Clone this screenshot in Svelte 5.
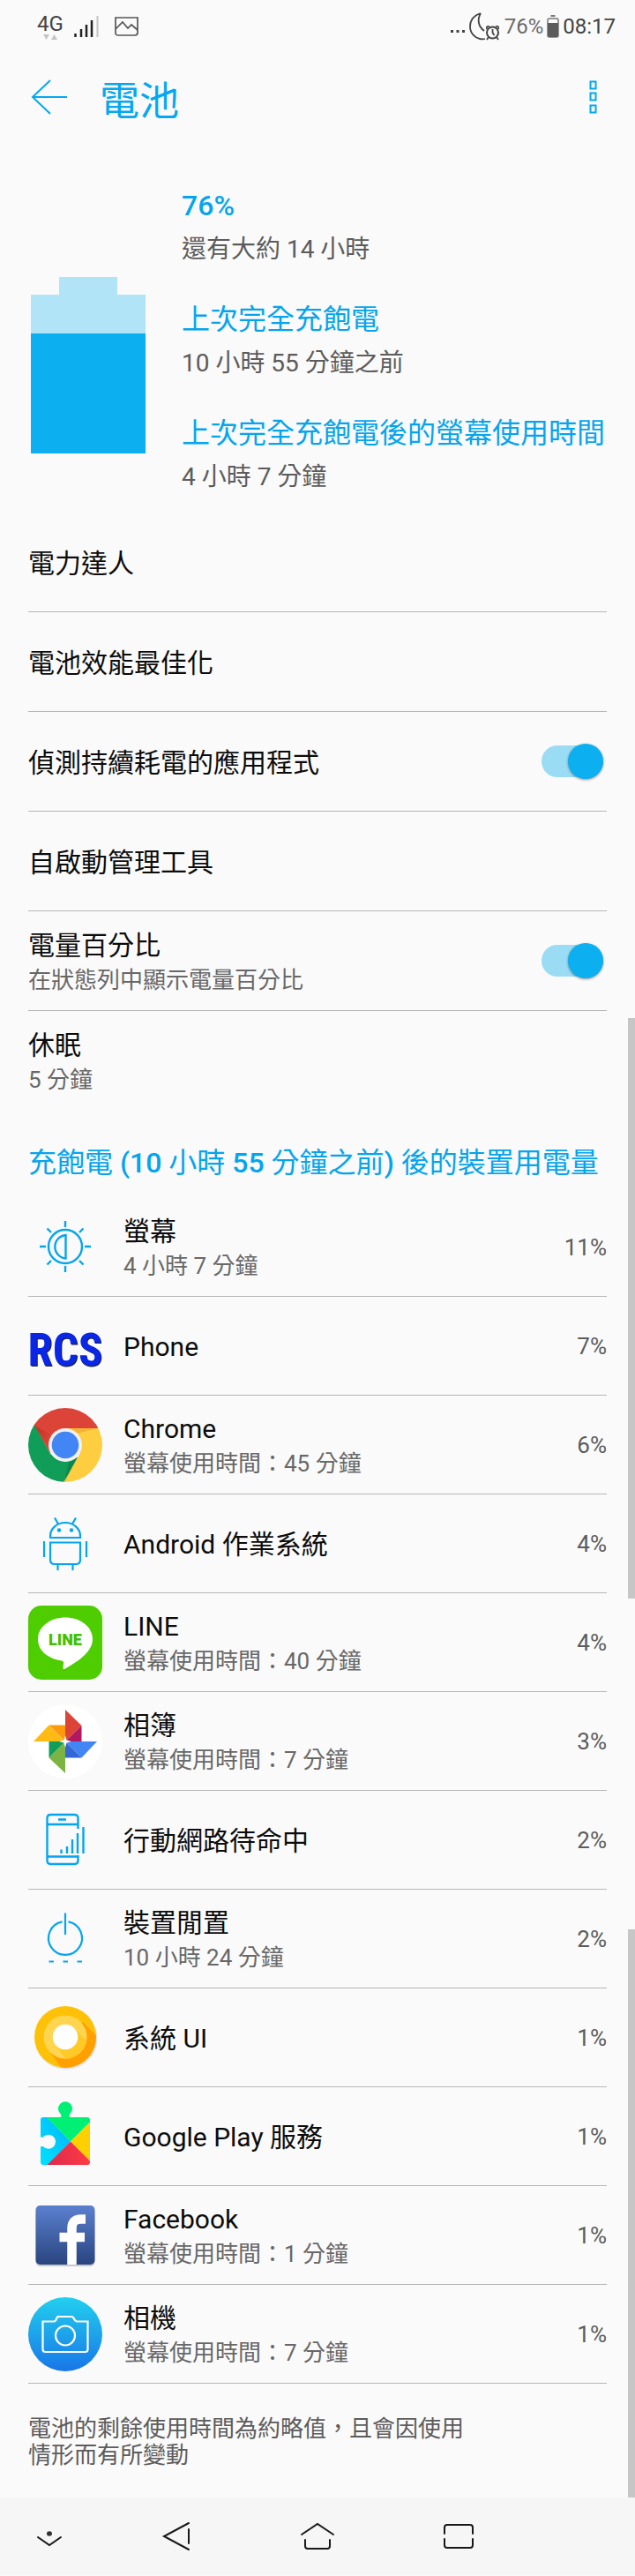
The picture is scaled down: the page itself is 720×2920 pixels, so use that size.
<script>
  let detectDrain = $state(true);
  let showPercent = $state(true);

  const apps = [
    { icon: 'screen', name: '螢幕', detail: '4 小時 7 分鐘', percent: 11 },
    { icon: 'rcs', name: 'Phone', percent: 7 },
    { icon: 'chrome', name: 'Chrome', detail: '螢幕使用時間：45 分鐘', percent: 6 },
    { icon: 'android', name: 'Android 作業系統', percent: 4 },
    { icon: 'line', name: 'LINE', detail: '螢幕使用時間：40 分鐘', percent: 4 },
    { icon: 'photos', name: '相簿', detail: '螢幕使用時間：7 分鐘', percent: 3 },
    { icon: 'mobile', name: '行動網路待命中', percent: 2 },
    { icon: 'idle', name: '裝置閒置', detail: '10 小時 24 分鐘', percent: 2 },
    { icon: 'system', name: '系統 UI', percent: 1 },
    { icon: 'play', name: 'Google Play 服務', percent: 1 },
    { icon: 'facebook', name: 'Facebook', detail: '螢幕使用時間：1 分鐘', percent: 1 },
    { icon: 'camera', name: '相機', detail: '螢幕使用時間：7 分鐘', percent: 1 }
  ];
</script>

<div class="page">
  <div class="status">
    <div class="group">
      <div class="network">
        <span>4G</span>
        <svg width="16" height="6" viewBox="0 0 16 6" fill="#c4c4c4"><path d="M0 0h7L3.500 6zM9 6h7L12.500 0z" /></svg>
      </div>
      <svg width="28" height="24" viewBox="0 0 28 24">
        <path d="M1.500 20v4M8 15v9M14 10v14M20 5v19" stroke="#222" stroke-width="2.500" fill="none" />
        <path d="M26.500 0v24" stroke="#c4c4c4" stroke-width="2" />
      </svg>
      <svg class="shot" width="27" height="22" viewBox="0 0 27 22" fill="none" stroke="#555" stroke-width="1.700">
        <path d="M1 1h25v17q0 3-3 3H4q-3 0-3-3zM1 14l8-8 6 7 4-4 7 6" />
      </svg>
    </div>
    <div class="group right">
      <svg class="dots" width="18" height="4" viewBox="0 0 18 4" fill="#444"><path d="M1 1h3v3H1zM7.500 1h3v3h-3zM14 1h3v3h-3z" /></svg>
      <svg width="36" height="32" viewBox="0 0 36 32" fill="none" stroke="#444" stroke-width="1.800">
        <path d="M13 1C4 4 1 10 1 16c0 8 6 13 11 14 3 .5 5 .3 6 0M13 1c-4 7-3 15 4 20" />
        <circle cx="26.500" cy="23" r="6.500" stroke-width="2" />
        <path d="M26.500 19v4l2 3M20 19q-1-4 3-3M33 19q1-4-3-3M22 28l-2 3M31 28l2 3" />
      </svg>
      <span class="level">76%</span>
      <svg width="14" height="26" viewBox="0 0 14 26"><path d="M4.500 0h5v2h-5z" fill="#777" /><path d="M1 6q0-2 2-2h8q2 0 2 2v17q0 2-2 2H3q-2 0-2-2z" fill="#fafafa" stroke="#777" stroke-width="1.500" /><path d="M1 9h12v14q0 2-2 2H3q-2 0-2-2z" fill="#5c5c5c" /></svg>
      <span class="clock">08:17</span>
    </div>
  </div>

  <header>
    <button class="plain" aria-label="返回">
      <svg width="42" height="40" viewBox="0 0 42 40" fill="none" stroke="#05a8f0" stroke-width="2"><path d="M41 20H2M22 1L2 20l20 19" /></svg>
    </button>
    <h1>電池</h1>
    <button class="plain" aria-label="更多選項">
      <svg width="10" height="38" viewBox="0 0 10 38" fill="none" stroke="#05a8f0" stroke-width="2"><path d="M1.500 1.500h6v8h-6zM1.500 14.500h6v8h-6zM1.500 28.500h6v8h-6z" /></svg>
    </button>
  </header>

  <section class="summary">
    <svg width="130" height="200" viewBox="0 0 130 200">
      <path d="M0 20h32V0h66v20h32v180H0z" fill="#b2e4f8" />
      <path d="M0 64h130v136H0z" fill="#0cafef" />
    </svg>
    <dl>
      <div><dt><b>76%</b></dt><dd>還有大約 14 小時</dd></div>
      <div><dt>上次完全充飽電</dt><dd>10 小時 55 分鐘之前</dd></div>
      <div><dt>上次完全充飽電後的螢幕使用時間</dt><dd>4 小時 7 分鐘</dd></div>
    </dl>
  </section>

  <section class="settings">
    <button class="row"><span class="text"><span class="name">電力達人</span></span></button>
    <button class="row"><span class="text"><span class="name">電池效能最佳化</span></span></button>
    <label class="row">
      <span class="text"><span class="name">偵測持續耗電的應用程式</span></span>
      <input type="checkbox" role="switch" bind:checked={detectDrain} />
    </label>
    <button class="row"><span class="text"><span class="name">自啟動管理工具</span></span></button>
    <label class="row">
      <span class="text"><span class="name">電量百分比</span><span class="detail">在狀態列中顯示電量百分比</span></span>
      <input type="checkbox" role="switch" bind:checked={showPercent} />
    </label>
    <button class="row"><span class="text"><span class="name">休眠</span><span class="detail">5 分鐘</span></span></button>
  </section>

  <section class="usage">
    <h2>充飽電 <b>(10</b> 小時 <b>55</b> 分鐘之前<b>)</b> 後的裝置用電量</h2>
    <ul>
      {#each apps as app}
        <li>
          {@render appIcon(app.icon)}
          <div class="text">
            <span class="name">{app.name}</span>
            {#if app.detail}<span class="detail">{app.detail}</span>{/if}
          </div>
          <span class="percent">{app.percent}%</span>
        </li>
      {/each}
    </ul>
    <p>電池的剩餘使用時間為約略值，且會因使用情形而有所變動</p>
  </section>

  <nav>
    <button class="plain" aria-label="隱藏導覽列">
      <svg width="40" height="40" viewBox="4 0 40 40"><path d="M7 21l13 9 13-9" /><ellipse cx="20" cy="17" rx="3" ry="2.800" fill="#333" stroke="none" /></svg>
    </button>
    <button class="plain" aria-label="返回">
      <svg width="40" height="40" viewBox="0 0 40 40"><path d="M34 5L6 20l28 15M34 12v16" /></svg>
    </button>
    <button class="plain" aria-label="主畫面">
      <svg width="40" height="40" viewBox="0 0 40 40"><path d="M2 18L20 6l18 12M6 24v7q0 3 3 3h22q3 0 3-3v-7" /></svg>
    </button>
    <button class="plain" aria-label="最近使用的應用程式">
      <svg width="40" height="40" viewBox="0 0 40 40"><path d="M4 17v-7q0-3 3-3h26q3 0 3 3v7M4 23v7q0 3 3 3h26q3 0 3-3v-7" /></svg>
    </button>
  </nav>

  <i class="scroll upper"></i>
  <i class="scroll lower"></i>
</div>

{#snippet appIcon(kind)}
  <svg class="icon" viewBox="0 0 84 84" aria-hidden="true">
    {#if kind === 'screen'}
      <g fill="none" stroke="#05a5ee" stroke-width="2.400">
        <circle cx="42" cy="41" r="19" />
        <path d="M42.500 28v26.500a13.300 13.300 0 0 1 0-26.500z" />
        <path d="M42 12v7M42 63v7M13 41h7M64 41h7M21.500 20.500l4.500 4.500M62.500 20.500l-4.500 4.500M21.500 61.500l4.500-4.500M62.500 61.500l-4.500-4.500" />
      </g>
    {:else if kind === 'rcs'}
      <text class="rcs back" x="43" y="65" text-anchor="middle">RCS</text>
      <text class="rcs" x="42" y="64" text-anchor="middle">RCS</text>
    {:else if kind === 'chrome'}
      <clipPath id="disc"><circle cx="42" cy="42" r="42" /></clipPath>
      <linearGradient id="redShade" x1="0" y1="0" x2="1" y2="1"><stop offset="0" stop-color="#a52714" stop-opacity="0.600" /><stop offset="0.700" stop-color="#a52714" stop-opacity="0" /></linearGradient>
      <g clip-path="url(#disc)">
        <path d="M0 0h84v23H42L25 52 6 18z" fill="#db4437" />
        <path d="M42 23h42v61H40L59 51z" fill="#ffcd40" />
        <path d="M7 19l18 33 17 9 14-5-16 28H0V19z" fill="#0f9d58" />
        <path d="M7 20l18 31 2-20z" fill="url(#redShade)" />
        <path d="M42 23h36l-22 6z" fill="#ea9f24" opacity="0.500" />
        <path d="M41 84l15-28-10 6z" fill="#07713d" opacity="0.500" />
      </g>
      <circle cx="42" cy="42" r="19" fill="#f1f1f1" />
      <circle cx="42" cy="42" r="15.300" fill="#4285f4" />
    {:else if kind === 'android'}
      <g fill="none" stroke="#05a5ee" stroke-width="2.200">
        <path d="M25 35v-2a17 15 0 0 1 34 0v2zM30 12.500l4 7M54 12.500l-4 7" />
        <path d="M25 40.500h34V60q0 5-5 5H30q-5 0-5-5zM18 39v18M66 39v18M33.500 65v7M50.500 65v7" />
      </g>
      <g fill="#05a5ee"><circle cx="35" cy="26.500" r="2.200" /><circle cx="49" cy="26.500" r="2.200" /></g>
    {:else if kind === 'line'}
      <rect width="84" height="84" rx="15" fill="#4ecd00" />
      <path d="M42 13.500c-17 0-31 10.500-31 24.500 0 13 11 22 27 24.500 2 .5 2.500 1.500 2 4l-.5 4c0 1.500.8 2 2 1.300C55 64 73 53 73 38c0-14-14-24.500-31-24.500z" fill="#fff" />
      <text class="line" x="42" y="45" text-anchor="middle">LINE</text>
    {:else if kind === 'photos'}
      <circle cx="42" cy="42" r="42" fill="#fff" />
      <path d="M42 6l18.500 18L42 42z" fill="#db4437" /><path d="M60.500 24v18H42z" fill="#b01860" />
      <path d="M78 42L60.500 60.500 42 42z" fill="#4285f4" /><path d="M60.500 60.500H42V42z" fill="#3367d6" />
      <path d="M42 78L23.500 60.500 42 42z" fill="#7cb342" /><path d="M23.500 60.500V42H42z" fill="#0f9d58" />
      <path d="M6 42l17.500-18.500L42 42z" fill="#ffbb14" /><path d="M23.500 23.500H42V42z" fill="#ff9a0e" />
      <path d="M42 35l1.500 5.500L49 42l-5.500 1.500L42 49l-1.500-5.500L35 42l5.500-1.500z" fill="#fff" />
    {:else if kind === 'mobile'}
      <g fill="none" stroke="#05a5ee" stroke-width="2.400">
        <path d="M56.500 29v-12q0-4-4-4h-27q-4 0-4 4v48q0 4 4 4h27q4 0 4-4v-6M21.500 24h35M21.500 60.500h35M34 18.500h9" />
        <path d="M37.500 52.500v4.500M44 49v8M50 41v16M56 34v23M62.500 27v30" />
      </g>
    {:else if kind === 'idle'}
      <g fill="none" stroke="#05a5ee" stroke-width="2.200">
        <path d="M45.500 22.300a19 19 0 1 1-7 0M42 12.500v24.500M23.500 67.500h5.500M39.500 67.500h5.500M55.500 67.500h5.500" />
      </g>
    {:else if kind === 'system'}
      <clipPath id="outer"><circle cx="42" cy="41" r="35" /></clipPath>
      <clipPath id="middle"><circle cx="42" cy="41" r="24.500" /></clipPath>
      <circle cx="43" cy="42.500" r="35.500" fill="#e2e4e8" />
      <circle cx="42" cy="41" r="35" fill="#ffc107" />
      <path d="M62 24l20 20v40H44L25 59z" fill="#ffa000" clip-path="url(#outer)" />
      <circle cx="42" cy="41" r="24.500" fill="#ffd54f" />
      <path d="M52 31l18 18v25H48L32 51z" fill="#ffca28" clip-path="url(#middle)" />
      <circle cx="42" cy="41" r="14.300" fill="#fff" />
    {:else if kind === 'play'}
      <linearGradient id="playBlue" x1="1" y1="0" x2="0" y2="1"><stop offset="0" stop-color="#00b4fa" /><stop offset="1" stop-color="#00e2ff" /></linearGradient>
      <linearGradient id="playRed" x1="0" y1="0" x2="1" y2="0"><stop offset="0" stop-color="#dc2a4c" /><stop offset="1" stop-color="#ff3a44" /></linearGradient>
      <clipPath id="square"><rect x="14" y="20" width="56" height="54" rx="3" /></clipPath>
      <g clip-path="url(#square)">
        <path d="M14 20h7.500L48 47.500 21.500 74.500H14z" fill="url(#playBlue)" />
        <path d="M21 20h49v5.500l-22 22z" fill="#00f076" />
        <path d="M70 25.500v44L48 47.500z" fill="#ffd000" />
        <path d="M48 47.500l22 22v5H21z" fill="url(#playRed)" />
      </g>
      <path d="M36 20.500q3-2.500 0-5a8 8 0 1 1 12 0q-3 2.500 0 5z" fill="#00f076" />
      <path d="M13 42q4 1.500 5-.5a8 8 0 1 1 0 12.500q-1-1.500-5-.500z" fill="#fafafa" />
    {:else if kind === 'facebook'}
      <linearGradient id="fb" x1="0" y1="0" x2="0" y2="1"><stop offset="0" stop-color="#5b80cf" /><stop offset="1" stop-color="#29457f" /></linearGradient>
      <rect x="8.500" y="10" width="67" height="67" rx="5" fill="#c9c9cb" />
      <rect x="8.500" y="8" width="67" height="67" rx="5" fill="url(#fb)" />
      <path d="M65 23.500h-5q-10.500 0-10.500 10V75M35.500 44H64" fill="none" stroke="#fff" stroke-width="10.500" />
    {:else}
      <linearGradient id="cam" x1="0" y1="0" x2="0" y2="1"><stop offset="0" stop-color="#22d0ee" /><stop offset="1" stop-color="#1876e8" /></linearGradient>
      <circle cx="42" cy="42" r="42" fill="url(#cam)" />
      <g fill="none" stroke="#fff" stroke-width="2.200">
        <path d="M16.500 27.500H29q2 0 3-3t3-2.500h14q2 0 3 2.500t3 3h12.500V59q0 3-3 3h-45q-3 0-3-3z" />
        <circle cx="42" cy="43.500" r="11" />
      </g>
    {/if}
  </svg>
{/snippet}

<style>
  :global(body) { margin: 0; background: #fafafa; }
  .page {
    position: relative;
    background: #fafafa;
    color: #0c0c0c;
    font-family: Roboto, "Noto Sans CJK TC", sans-serif;
    font-size: 26px;
  }
  button { font: inherit; color: inherit; background: none; border: 0; padding: 0; text-align: left; cursor: pointer; }
  svg { display: block; flex: none; }
  .plain { display: flex; }

  .status {
    display: flex;
    justify-content: space-between;
    height: 56px;
    box-sizing: border-box;
    padding: 4px 22px 0 42px;
    font-size: 24px;
    color: #444;
  }
  .group { display: flex; align-items: center; gap: 12px; }
  .right { gap: 4px; }
  .network { display: flex; flex-direction: column; align-items: center; line-height: 22px; gap: 1px; }
  .shot { margin-left: 6px; }
  .dots { margin-top: 10px; }
  .level { color: #6a6a6a; }

  header { display: flex; align-items: center; height: 108px; padding: 0 42px 0 35px; }
  h1 { flex: 1; margin: 0; padding: 12px 0 0 36px; font-size: 45px; font-weight: 400; line-height: 64px; color: #05a8f0; }

  .summary { display: flex; align-items: flex-end; gap: 41px; padding: 45px 32px 16px 35px; }
  .summary > svg { margin-bottom: 51px; }
  dl { display: flex; flex-direction: column; gap: 31px; margin: 0; }
  dt, dd { margin: 0; line-height: 48px; }
  dt, h2 { font-size: 32px; font-weight: 400; color: #05a5ee; }
  b { font-weight: 500; }
  dd { padding-top: 2px; font-size: 28px; color: #5c5c5c; }

  .settings { display: flex; flex-direction: column; margin: 0 32px; }
  .row {
    display: flex;
    align-items: center;
    justify-content: space-between;
    min-height: 113px;
    box-sizing: border-box;
    border-bottom: 1px solid #b6b6b6;
    cursor: pointer;
  }
  .row:last-child { border-color: transparent; }
  .text { display: flex; flex-direction: column; padding-top: 3px; }
  .name { font-size: 30px; line-height: 40px; }
  .detail { line-height: 38px; color: #686868; }

  input {
    appearance: none;
    width: 70px;
    height: 36px;
    margin: 0 4px 0 0;
    border-radius: 18px;
    background: #9bdcf5;
    display: flex;
    align-items: center;
    cursor: pointer;
  }
  input::before {
    content: "";
    flex: none;
    width: 40px;
    height: 40px;
    border-radius: 50%;
    background: #0cafef;
    box-shadow: 0 1px 3px rgba(0, 0, 0, 0.4);
  }
  input:checked { justify-content: flex-end; }
  input:not(:checked) { background: #c8c8c8; }
  input:not(:checked)::before { background: #f4f4f4; }

  .usage { padding: 35px 32px 33px; }
  h2 { margin: 0 0 16px; line-height: 48px; }
  ul { list-style: none; margin: 0; padding: 0; }
  li {
    display: flex;
    align-items: center;
    gap: 24px;
    min-height: 112px;
    box-sizing: border-box;
    border-bottom: 1px solid #b6b6b6;
  }
  .icon { width: 84px; height: 84px; }
  li .text { flex: 1; }
  .percent { color: #5c5c5c; }
  .rcs { font: 700 51px "Liberation Sans Narrow", "Roboto Condensed", "DejaVu Sans Condensed", sans-serif; fill: #0a26e6; }
  .back { fill: #222; }
  .line { font: 900 18px Roboto, sans-serif; fill: #45c000; }
  p { max-width: 510px; margin: 36px 0 0; line-height: 30px; color: #5c5c5c; }

  nav {
    display: grid;
    grid-template-columns: 3fr 4fr 4fr 4fr 3fr;
    align-items: center;
    height: 88px;
    background: #f6f6f6;
  }
  nav button { justify-self: center; }
  nav svg { fill: none; stroke: #181818; stroke-width: 2; stroke-linecap: round; }

  .scroll { position: absolute; right: 0; width: 8px; background: #c6c6c6; }
  .upper { top: 1154px; height: 658px; }
  .lower { top: 2187px; bottom: 88px; }
</style>
